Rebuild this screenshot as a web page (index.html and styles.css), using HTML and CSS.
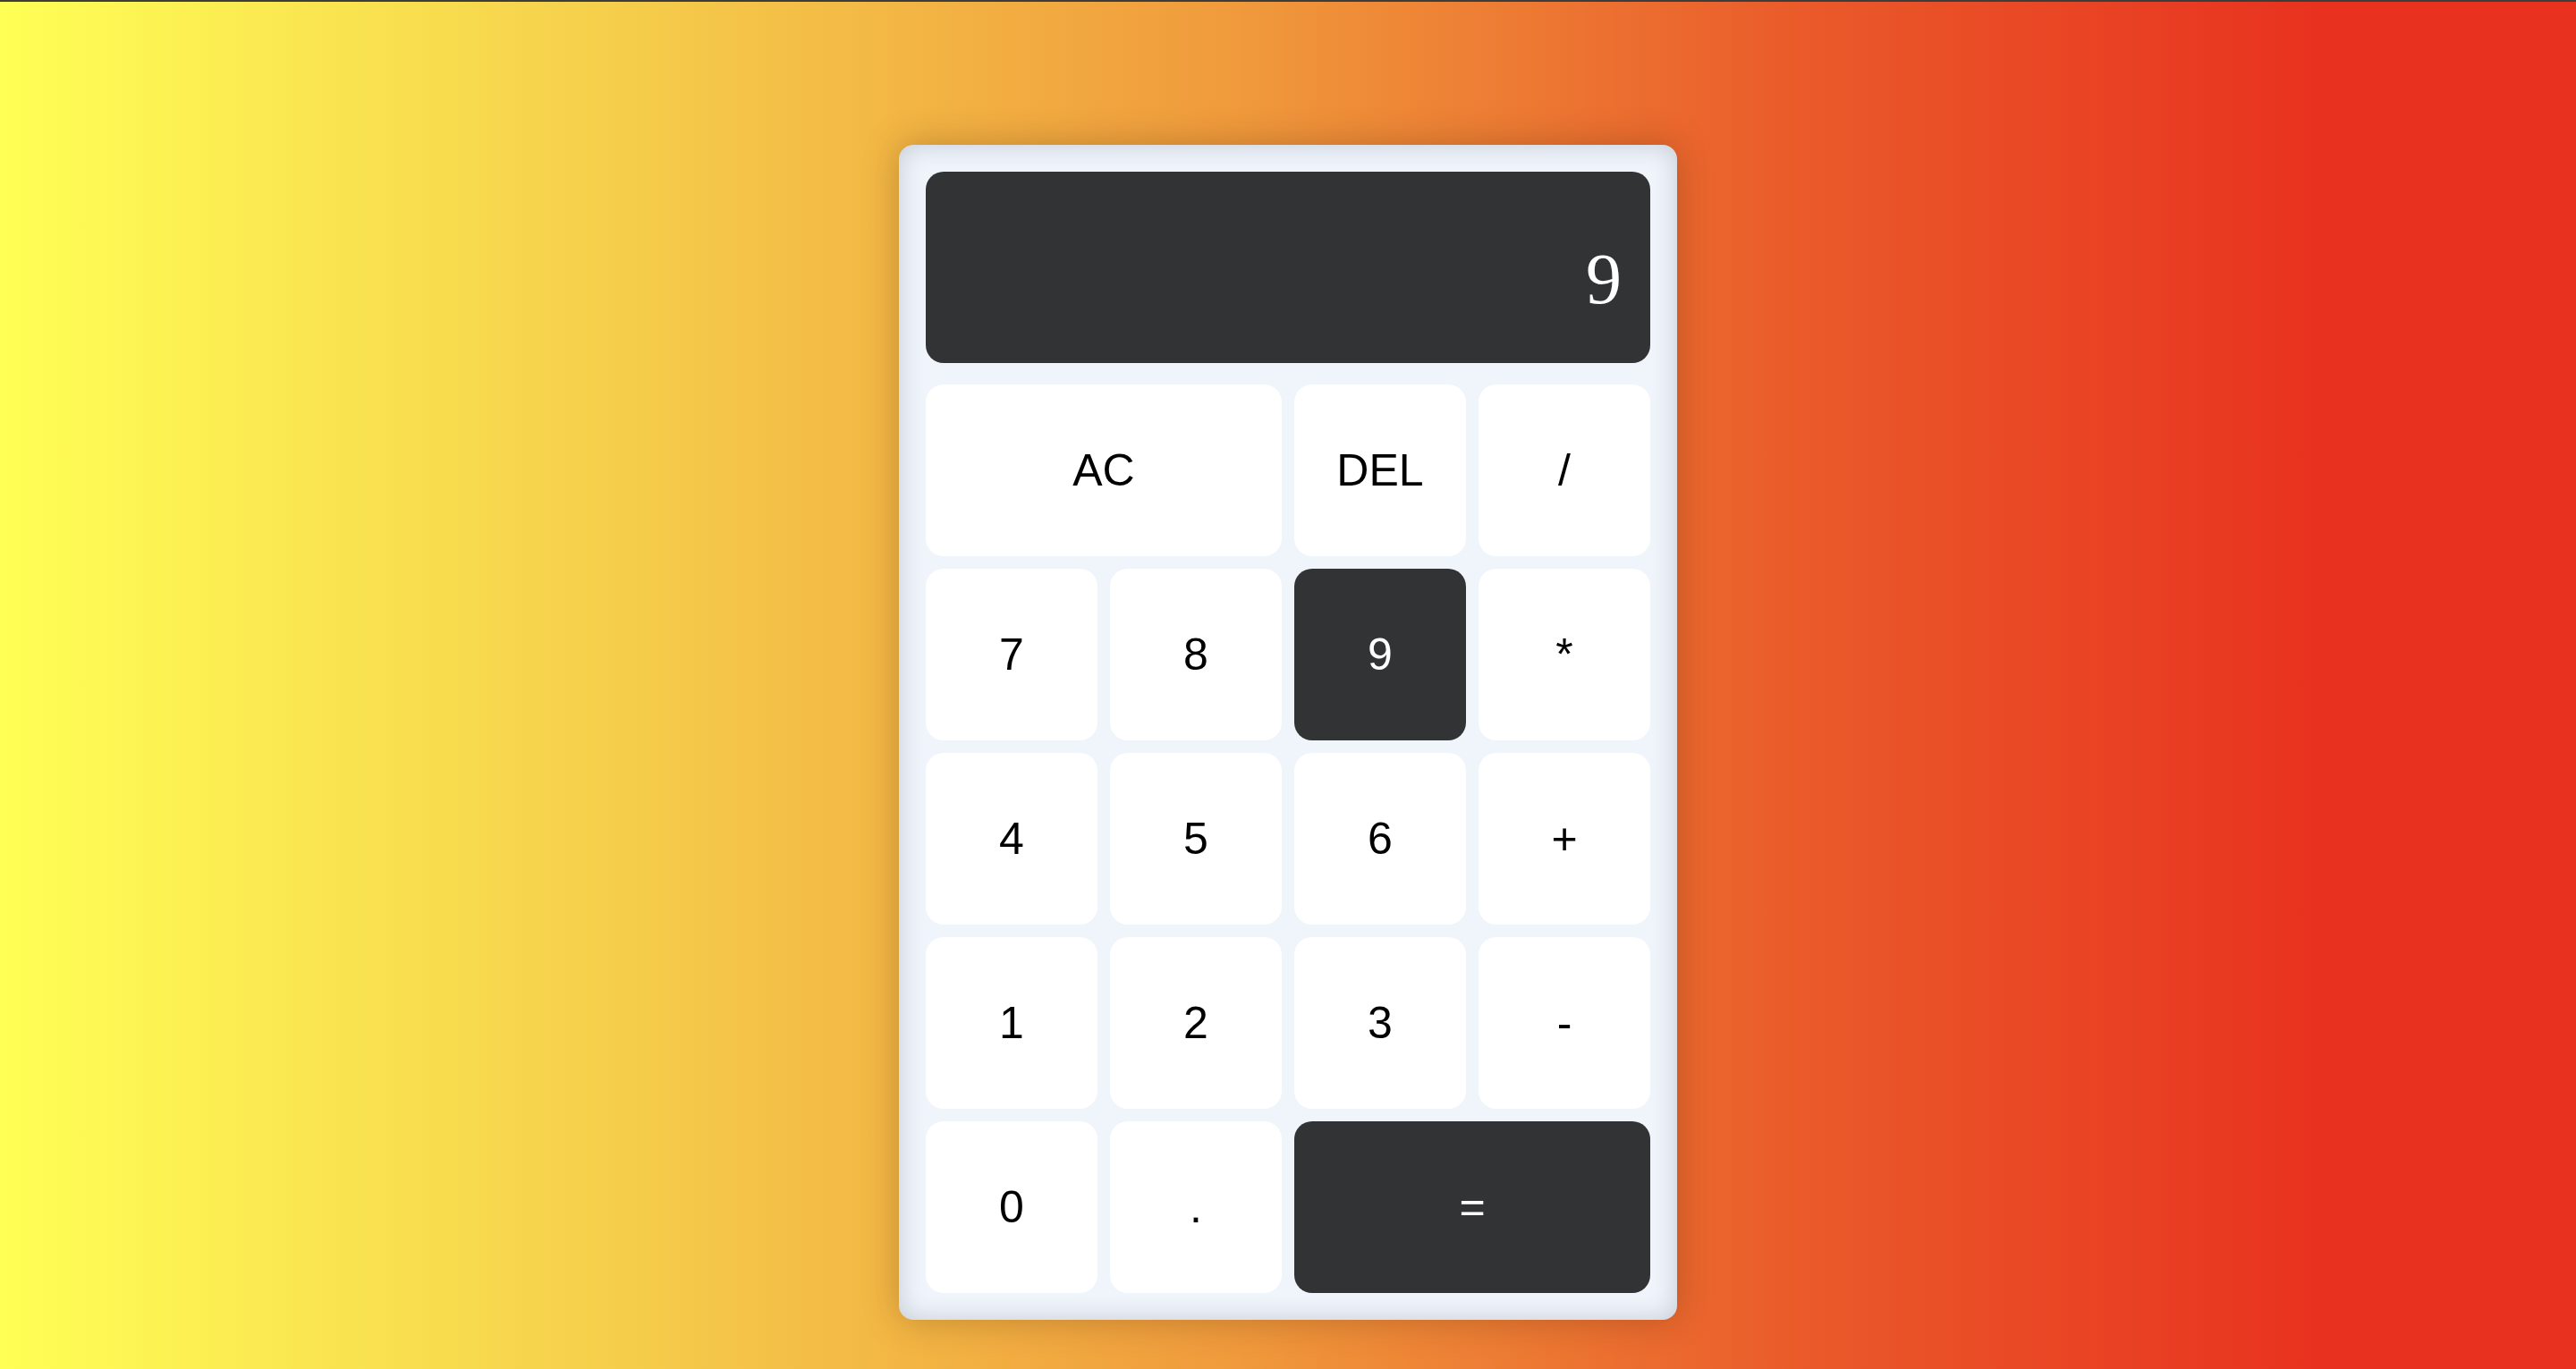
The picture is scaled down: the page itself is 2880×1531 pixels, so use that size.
FILE: index.html
```html
<!DOCTYPE html>
<html lang="en">
<head>
<meta charset="utf-8">
<title>Calculator</title>
<link rel="stylesheet" href="styles.css">
</head>
<body>
<div class="calculator">
  <div class="display"><span class="value">9</span></div>
  <div class="keys">
    <button class="key span-2">AC</button>
    <button class="key">DEL</button>
    <button class="key">/</button>
    <button class="key">7</button>
    <button class="key">8</button>
    <button class="key dark">9</button>
    <button class="key">*</button>
    <button class="key">4</button>
    <button class="key">5</button>
    <button class="key">6</button>
    <button class="key">+</button>
    <button class="key">1</button>
    <button class="key">2</button>
    <button class="key">3</button>
    <button class="key">-</button>
    <button class="key">0</button>
    <button class="key">.</button>
    <button class="key dark span-2">=</button>
  </div>
</div>
</body>
</html>
```
FILE: styles.css
```css
* { box-sizing: border-box; }
html, body { margin: 0; padding: 0; }
body {
  min-height: 100vh;
  border-top: 2px solid #3d3d3d;
  background: linear-gradient(to right, #ffff55 0%, #f6d24c 22%, #f09a3c 48%, #ea5a2a 70%, #e8321f 90%, #e8321f 100%);
  font-family: "Liberation Sans", Arial, sans-serif;
  display: flex;
  justify-content: center;
  align-items: flex-start;
}
.calculator {
  margin-top: 160px;
  width: 870px;
  padding: 30px;
  background: #f0f5fc;
  border-radius: 16px;
  box-shadow: inset 0 0 28px rgba(40, 50, 70, 0.22), 0 0 40px rgba(60, 30, 0, 0.28);
  display: flex;
  flex-direction: column;
  gap: 24px;
}
.display {
  height: 214px;
  background: #323335;
  border-radius: 20px;
  display: flex;
  justify-content: flex-end;
  align-items: flex-end;
  padding: 0 32px 48px;
}
.value {
  font-family: "Liberation Serif", "Times New Roman", serif;
  font-size: 80px;
  color: #ffffff;
}
.keys {
  display: grid;
  grid-template-columns: repeat(4, 192px);
  grid-auto-rows: 192px;
  gap: 14px;
}
.key {
  border: none;
  border-radius: 20px;
  background: #ffffff;
  color: #000000;
  font-family: "Liberation Sans", Arial, sans-serif;
  font-size: 50px;
  padding: 0;
  margin: 0;
}
.key.dark {
  background: #323335;
  color: #ffffff;
}
.span-2 { grid-column: span 2; }
```
